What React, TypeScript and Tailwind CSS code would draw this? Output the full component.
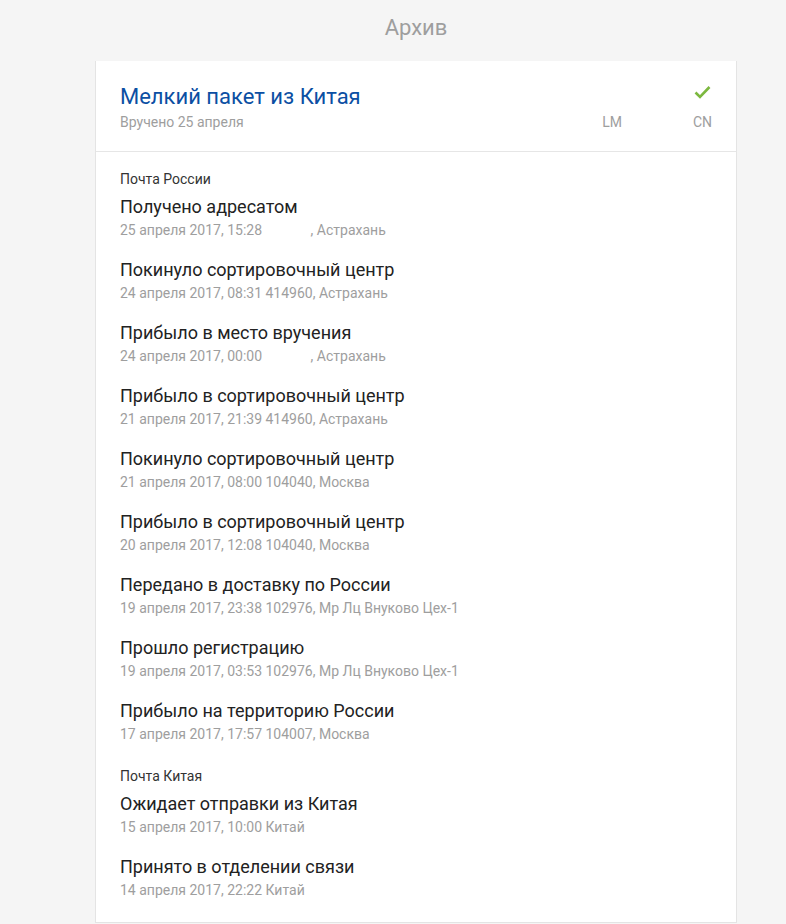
import React from 'react';

interface TrackEvent {
  title: string;
  detail: string;
}

interface Section {
  name: string;
  events: TrackEvent[];
}

const GAP = '\u00a0'.repeat(14);

const SECTIONS: Section[] = [
  {
    name: 'Почта России',
    events: [
      { title: 'Получено адресатом', detail: `25 апреля 2017, 15:28${GAP}, Астрахань` },
      { title: 'Покинуло сортировочный центр', detail: '24 апреля 2017, 08:31 414960, Астрахань' },
      { title: 'Прибыло в место вручения', detail: `24 апреля 2017, 00:00${GAP}, Астрахань` },
      { title: 'Прибыло в сортировочный центр', detail: '21 апреля 2017, 21:39 414960, Астрахань' },
      { title: 'Покинуло сортировочный центр', detail: '21 апреля 2017, 08:00 104040, Москва' },
      { title: 'Прибыло в сортировочный центр', detail: '20 апреля 2017, 12:08 104040, Москва' },
      { title: 'Передано в доставку по России', detail: '19 апреля 2017, 23:38 102976, Мр Лц Внуково Цех-1' },
      { title: 'Прошло регистрацию', detail: '19 апреля 2017, 03:53 102976, Мр Лц Внуково Цех-1' },
      { title: 'Прибыло на территорию России', detail: '17 апреля 2017, 17:57 104007, Москва' },
    ],
  },
  {
    name: 'Почта Китая',
    events: [
      { title: 'Ожидает отправки из Китая', detail: '15 апреля 2017, 10:00 Китай' },
      { title: 'Принято в отделении связи', detail: '14 апреля 2017, 22:22 Китай' },
    ],
  },
];

const App: React.FC = () => {
  return (
    <div className="min-h-[924px] bg-[#f5f5f5] font-['Roboto',sans-serif] overflow-hidden">
      <div className="ml-[95px] w-[642px]">
        {/* Page title */}
        <h1 className="h-[61px] pt-[14px] text-center text-[22px] leading-[28px] text-[#9e9e9e]">Архив</h1>

        <div className="bg-white border border-[#e4e4e4] border-t-0">
          {/* Header */}
          <div className="flex items-end justify-between pl-6 pr-6 pt-[22px] pb-[19px] border-b border-[#e6e6e6]">
            <div>
              <h2 className="text-[22px] leading-[28px] text-[#0b4fa3] mb-px">Мелкий пакет из Китая</h2>
              <p className="text-[14px] leading-[20px] text-[#9e9e9e]">Вручено 25 апреля</p>
            </div>
            <div className="flex items-end gap-[71px] text-[14px] leading-[20px] text-[#9e9e9e]">
              <span>LM</span>
              <div className="flex flex-col items-end">
                <svg width="17" height="14" viewBox="0 0 17 14" className="mb-[13px] mr-px">
                  <path d="M1.5 7.5 L6 12 L15.5 2" fill="none" stroke="#7cb83f" strokeWidth="2.6" />
                </svg>
                <span>CN</span>
              </div>
            </div>
          </div>

          {/* Events */}
          <div className="pl-6 pr-6 pt-[19px] pb-[22px]">
            {SECTIONS.map((section, si) => (
              <div key={section.name} className={si > 0 ? 'mt-6' : ''}>
                <div className="text-[14px] leading-[16px] text-[#333] mb-2">{section.name}</div>
                {section.events.map((ev, i) => (
                  <div key={i} className={i < section.events.length - 1 ? 'mb-[18px]' : ''}>
                    <div className="text-[18px] leading-[24px] text-[#222] mb-px">{ev.title}</div>
                    <div className="text-[14px] leading-[20px] text-[#9e9e9e] whitespace-pre">{ev.detail}</div>
                  </div>
                ))}
              </div>
            ))}
          </div>
        </div>
      </div>
    </div>
  );
};

export default App;
